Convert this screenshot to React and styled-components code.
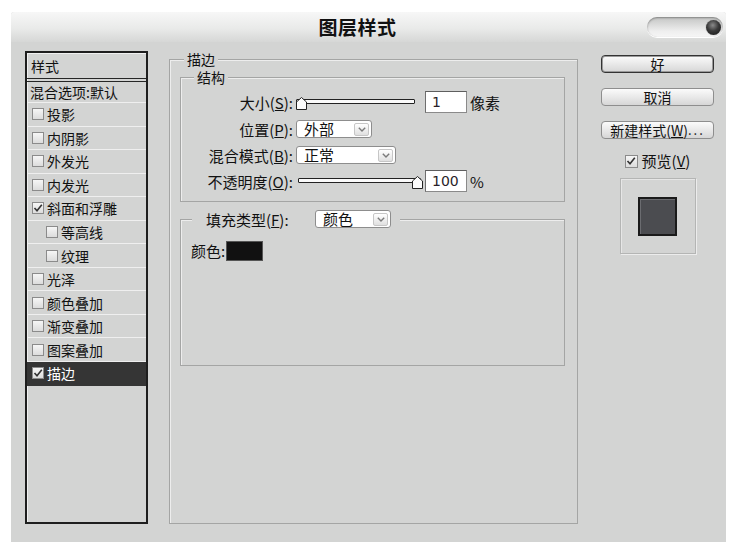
import React from 'react';
import styled, { createGlobalStyle } from 'styled-components';

const GlobalStyle = createGlobalStyle`
  html, body { margin: 0; padding: 0; background: #fff; }
  body { font-family: "Noto Sans CJK SC", "Noto Sans", sans-serif; color: #111; }
  * { box-sizing: border-box; }
`;

const BG = '#d3d4d3';

const Page = styled.div`
  width: 733px;
  height: 546px;
  padding: 12px 7px 4px 11px;
`;

const Dialog = styled.div`
  width: 715px;
  height: 530px;
  display: flex;
  flex-direction: column;
  background: ${BG};
  border-radius: 3px 3px 0 0;
`;

const TitleBar = styled.div`
  height: 30px;
  flex: none;
  display: grid;
  grid-template-columns: 1fr auto 1fr;
  align-items: center;
  background: linear-gradient(#f7f7f7, #e9eae9 55%, #d6d7d6);
  border-radius: 3px 3px 0 0;
`;

const Title = styled.div`
  grid-column: 2;
  font-size: 19px;
  font-weight: 700;
  letter-spacing: 0.5px;
  margin-right: 22px;
  line-height: 24px;
`;

const Pill = styled.div`
  grid-column: 3;
  justify-self: end;
  margin-right: 3px;
  width: 76px;
  height: 20px;
  border-radius: 10px;
  background: linear-gradient(#c4c5c4, #eeeeee 70%, #f6f6f6);
  box-shadow: inset 0 1px 2px rgba(0, 0, 0, 0.35), 0 1px 0 #fff;
  display: flex;
  align-items: center;
  justify-content: flex-end;
  padding-right: 2px;
`;

const Ball = styled.div`
  width: 15px;
  height: 15px;
  border-radius: 50%;
  background: radial-gradient(circle at 45% 35%, #8a8a8a 0, #3a3a3a 45%, #111 100%);
  box-shadow: 0 0 1px rgba(0,0,0,.6);
`;

const Body = styled.div`
  flex: 1;
  display: flex;
  padding: 9px 12px 18px 14px;
`;

const StyleList = styled.div`
  width: 123px;
  flex: none;
  border: 2px solid #1e1e1e;
  display: flex;
  flex-direction: column;
  background: ${BG};
  box-shadow: inset 1px 1px 0 #f0f0f0;
`;

const ListHeader = styled.div`
  height: 26px;
  flex: none;
  display: flex;
  align-items: center;
  padding-left: 4px;
  font-size: 14px;
  border-bottom: 1px solid #262626;
`;

const BlendRow = styled.div`
  height: 22px;
  flex: none;
  margin-top: 2px;
  display: flex;
  align-items: center;
  padding-left: 3px;
  font-size: 14px;
  border-top: 1px solid #262626;
  border-bottom: 1px solid #efefef;
`;

const ListItem = styled.div`
  height: 23.55px;
  flex: none;
  display: flex;
  align-items: center;
  gap: 3px;
  padding-left: ${p => p.$indent ? 19 : 5}px;
  font-size: 14px;
  border-bottom: 1px solid ${p => p.$selected ? '#353535' : '#efefef'};
  background: ${p => p.$selected ? '#353535' : 'transparent'};
  color: ${p => p.$selected ? '#fff' : '#111'};
`;

const Box = styled.span`
  width: ${p => p.$size || 12}px;
  height: ${p => p.$size || 12}px;
  flex: none;
  border: 1px solid #8b8b8b;
  background: linear-gradient(#f6f6f6, #dcdcdc);
  display: inline-flex;
  align-items: center;
  justify-content: center;
`;

const Check = ({ size }) => (
  <Box $size={size}>
    <svg width="10" height="10" viewBox="0 0 10 10">
      <polyline points="1.5,5 4,7.8 8.8,1.8" fill="none" stroke="#333" strokeWidth="1.6" />
    </svg>
  </Box>
);

const Frame = styled.div`
  position: relative;
  border: 1px solid #a4a5a4;
  box-shadow: inset 1px 1px 0 #ededed;
`;

const Main = styled(Frame)`
  margin: 8px 0 0 21px;
  padding: 17px 12px 0 10px;
  width: 409px;
  flex: none;
`;

const Group = styled(Frame)`
  margin-top: ${p => p.$top}px;
`;

const Legend = styled.span`
  position: absolute;
  top: -9px;
  left: ${p => p.$offset}px;
  padding: 0 3px;
  font-size: 14px;
  line-height: 16px;
  background: ${BG};
`;

const FormGrid = styled.div`
  display: grid;
  grid-template-columns: 112px 1fr;
  grid-template-rows: 28px 26px 26px 26px;
  column-gap: 3px;
  padding: 10px 0 7px 0;
`;

const Label = styled.div`
  font-size: 15px;
  text-align: right;
  align-self: center;
  white-space: nowrap;
`;

const Cell = styled.div`
  display: flex;
  align-items: center;
`;

const SliderWrap = styled.div`
  position: relative;
  width: 129px;
  height: 16px;
  flex: none;
`;

const Track = styled.div`
  position: absolute;
  top: 5px;
  left: ${p => p.$left}px;
  width: ${p => p.$width}px;
  height: 5px;
  border: 1px solid #222;
  background: #fafafa;
  border-radius: 1px;
`;

const Thumb = styled.svg`
  position: absolute;
  top: 3px;
  left: ${p => p.$left}px;
`;

const Slider = ({ left, width, thumb }) => (
  <SliderWrap>
    <Track $left={left} $width={width} />
    <Thumb $left={thumb} width="11" height="13" viewBox="0 0 11 13">
      <polygon points="5.5,0.5 10.5,5 10.5,12.5 0.5,12.5 0.5,5" fill="#fbfbfb" stroke="#222" strokeWidth="1" />
    </Thumb>
  </SliderWrap>
);

const NumInput = styled.div`
  width: 42px;
  height: 22px;
  flex: none;
  background: #fff;
  border: 1px solid #8a8a8a;
  border-top-color: #5e5e5e;
  border-left-color: #6e6e6e;
  font-family: "DejaVu Sans", "Noto Sans", sans-serif;
  font-size: 14px;
  line-height: 20px;
  padding-left: 6px;
  color: #2a1f2a;
`;

const Unit = styled.span`
  font-size: 15px;
  margin-left: 3px;
`;

const Select = styled.div`
  width: ${p => p.$width}px;
  height: 18px;
  flex: none;
  display: flex;
  align-items: center;
  background: #fff;
  border: 1px solid #8d8d8d;
  border-radius: 3px;
  padding: 0 2px 0 7px;
  font-size: 15px;
  line-height: 16px;
`;

const Chevron = styled.span`
  margin-left: auto;
  width: 15px;
  height: 13px;
  border: 1px solid #c6c6c6;
  border-radius: 2px;
  background: linear-gradient(#ffffff, #e0e0e0);
  display: inline-flex;
  align-items: center;
  justify-content: center;
`;

const Dropdown = ({ width, children }) => (
  <Select $width={width}>
    {children}
    <Chevron>
      <svg width="8" height="5" viewBox="0 0 8 5">
        <polyline points="0.8,0.8 4,4 7.2,0.8" fill="none" stroke="#7a7a7a" strokeWidth="1.4" />
      </svg>
    </Chevron>
  </Select>
);

const FillLegend = styled.div`
  position: absolute;
  top: -10px;
  left: 11px;
  padding: 0 9px 0 14px;
  display: flex;
  align-items: center;
  height: 18px;
  background: ${BG};
`;

const FillLabel = styled.span`
  font-size: 15px;
  width: 109px;
`;

const FillBody = styled.div`
  height: 145px;
  padding: 21px 0 0 10px;
  display: flex;
  align-items: flex-start;
`;

const ColorLabel = styled.span`
  font-size: 15px;
  line-height: 20px;
`;

const Swatch = styled.div`
  width: 37px;
  height: 20px;
  margin-left: 1px;
  background: #111;
  border: 1px solid #555;
`;

const Side = styled.div`
  width: 113px;
  margin-left: 23px;
  flex: none;
  display: flex;
  flex-direction: column;
  align-items: center;
  padding-top: 4px;
`;

const Button = styled.div`
  width: 113px;
  height: 18px;
  margin-bottom: 15px;
  border: 1px solid ${p => p.$primary ? '#333' : '#8e8e8e'};
  border-radius: 4px;
  background: linear-gradient(#fbfbfb, #e9e9e9 50%, #d6d6d6);
  box-shadow: ${p => p.$primary ? 'inset 0 0 0 1px #9a9a9a' : 'none'};
  display: flex;
  align-items: center;
  justify-content: center;
  font-size: 14px;
  line-height: 16px;
  white-space: nowrap;
`;

const Dots = styled.span`
  letter-spacing: 2px;
  font-size: 13px;
`;

const PreviewToggle = styled.div`
  margin-top: -1px;
  display: flex;
  align-items: center;
  gap: 4px;
  font-size: 15px;
  line-height: 16px;
`;

const PreviewFrame = styled.div`
  margin-top: 9px;
  width: 76px;
  height: 76px;
  border: 1px solid #b4b5b4;
  box-shadow: inset 1px 1px 0 #e6e6e6, 1px 1px 0 #ececec;
  display: flex;
  align-items: center;
  justify-content: center;
`;

const PreviewSquare = styled.div`
  width: 39px;
  height: 39px;
  background: #4b4c50;
  border: 2px solid #1a1a1a;
  box-shadow: inset 1px 1px 0 #6b6c70;
`;

const items = [
  { name: '投影' },
  { name: '内阴影' },
  { name: '外发光' },
  { name: '内发光' },
  { name: '斜面和浮雕', checked: true },
  { name: '等高线', indent: true },
  { name: '纹理', indent: true },
  { name: '光泽' },
  { name: '颜色叠加' },
  { name: '渐变叠加' },
  { name: '图案叠加' },
  { name: '描边', checked: true, selected: true },
];

export default function App() {
  return (
    <Page>
      <GlobalStyle />
      <Dialog>
        <TitleBar>
          <Title>图层样式</Title>
          <Pill><Ball /></Pill>
        </TitleBar>
        <Body>
          <StyleList>
            <ListHeader>样式</ListHeader>
            <BlendRow>混合选项:默认</BlendRow>
            {items.map(it => (
              <ListItem key={it.name} $indent={it.indent} $selected={it.selected}>
                {it.checked ? <Check /> : <Box />}
                <span>{it.name}</span>
              </ListItem>
            ))}
          </StyleList>

          <Main>
            <Legend $offset={14}>描边</Legend>
            <Group $top={0}>
              <Legend $offset={13}>结构</Legend>
              <FormGrid>
                <Label>大小(<u>S</u>):</Label>
                <Cell>
                  <Slider left={0} width={119} thumb={0} />
                  <NumInput>1</NumInput>
                  <Unit>像素</Unit>
                </Cell>
                <Label>位置(<u>P</u>):</Label>
                <Cell><Dropdown width={76}>外部</Dropdown></Cell>
                <Label>混合模式(<u>B</u>):</Label>
                <Cell><Dropdown width={100}>正常</Dropdown></Cell>
                <Label>不透明度(<u>O</u>):</Label>
                <Cell>
                  <Slider left={2} width={123} thumb={116} />
                  <NumInput>100</NumInput>
                  <Unit>%</Unit>
                </Cell>
              </FormGrid>
            </Group>
            <Group $top={17}>
              <FillLegend>
                <FillLabel>填充类型(<u>F</u>):</FillLabel>
                <Dropdown width={76}>颜色</Dropdown>
              </FillLegend>
              <FillBody>
                <ColorLabel>颜色:</ColorLabel>
                <Swatch />
              </FillBody>
            </Group>
          </Main>

          <Side>
            <Button $primary>好</Button>
            <Button>取消</Button>
            <Button>新建样式(<u>W</u>)<Dots>...</Dots></Button>
            <PreviewToggle>
              <Check size={13} />
              <span>预览(<u>V</u>)</span>
            </PreviewToggle>
            <PreviewFrame>
              <PreviewSquare />
            </PreviewFrame>
          </Side>
        </Body>
      </Dialog>
    </Page>
  );
}
